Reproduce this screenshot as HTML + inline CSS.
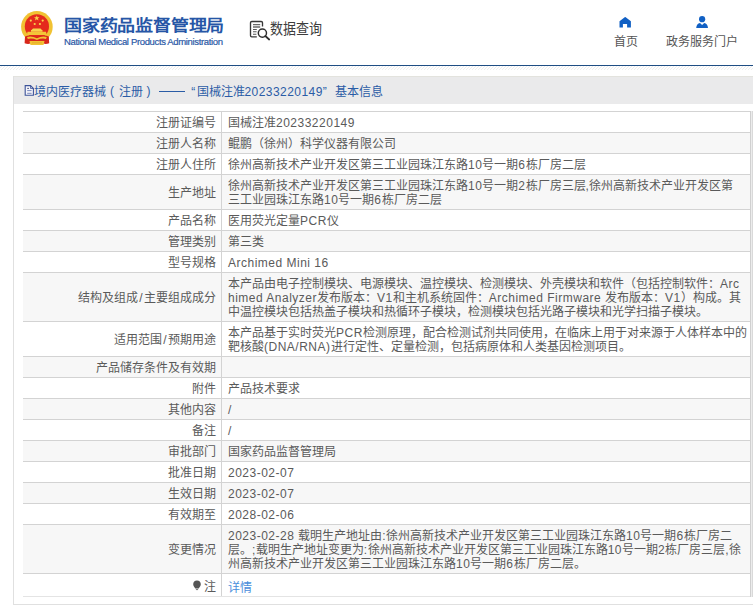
<!DOCTYPE html>
<html lang="zh-CN"><head><meta charset="utf-8">
<style>
html,body{margin:0;padding:0;background:#fff;width:753px;height:605px;overflow:hidden;font-family:"Liberation Sans",sans-serif;}
.abs{position:absolute;white-space:nowrap;}
.title{left:64px;top:15px;font-size:18px;line-height:20px;font-weight:bold;color:#2656a6;letter-spacing:-0.2px;transform:scaleY(0.9);transform-origin:50% 55%;}
.en{left:64px;top:36px;font-size:9.5px;line-height:11px;color:#2a58a6;letter-spacing:-0.35px;-webkit-text-stroke:0.2px #2a58a6;}
.sjcx{left:270px;top:21px;font-size:13px;line-height:16px;color:#3d3d3d;transform:scaleY(1.12);transform-origin:50% 45%;}
.nav{font-size:12px;line-height:14px;color:#555;}
.bline{left:0;top:65px;width:753px;height:1px;background:#1f4e84;}
.hatch{left:0;top:66px;width:753px;height:4px;background:repeating-linear-gradient(135deg,#fff 0,#fff 1.3px,#eeeeee 1.3px,#eeeeee 2.12px);}
.panel{left:13px;top:76px;width:745px;height:528px;border-left:1px solid #e0e0e0;border-bottom:1px solid #e0e0e0;background:#fff;}
.phead{left:14px;top:76px;width:739px;height:28px;background:#eaeaeb;border-top:1px solid #e3e3de;box-sizing:border-box;}
.crumb{top:85px;font-size:12px;line-height:14px;color:#2a5ca6;}
.row{position:absolute;left:23px;width:727px;border-top:1px solid #d3d3d3;}
.row.g{background:#f7f7f7;}
.lab{position:absolute;left:0;top:4px;width:192.5px;text-align:right;font-size:12px;line-height:14px;color:#5a5a5a;white-space:nowrap;}
.val{position:absolute;left:205px;top:4px;font-size:12px;line-height:14px;color:#5a5a5a;white-space:nowrap;}
.l{letter-spacing:0.5px;}
.vsep{position:absolute;left:198px;top:0;bottom:0;width:1px;background:#d3d3d3;}
.rb{left:750px;top:111px;width:3px;height:486px;background:linear-gradient(90deg,#d0d0d0 0,#d0d0d0 1px,#ececec 1px,#ececec 2px,#d9d9d9 2px);}
.pin{display:inline-block;width:12px;vertical-align:top;position:relative;top:-1px;}
.pin svg{display:block;}
</style></head><body>
<!-- emblem -->
<svg class="abs" style="left:18px;top:6px" width="38" height="42" viewBox="0 0 38 42">
  <circle cx="18.9" cy="20.8" r="15.8" fill="#f1c233"/>
  <circle cx="18.9" cy="20.4" r="12.1" fill="#e42a1d"/>
  <polygon points="18.75,9.4 19.5,11.3 21.5,11.3 19.9,12.5 20.5,14.4 18.75,13.2 17,14.4 17.6,12.5 16,11.3 18,11.3" fill="#f8d44c"/>
  <circle cx="12.8" cy="14.6" r="1.1" fill="#f8d44c"/>
  <circle cx="24.7" cy="14.6" r="1.1" fill="#f8d44c"/>
  <circle cx="16.7" cy="18" r="1.1" fill="#f8d44c"/>
  <circle cx="21.9" cy="18" r="1.1" fill="#f8d44c"/>
  <path d="M15 22.6 L22.5 22.6 L24 24 L13.5 24 Z M13 24 H24.5 V25.8 H13 Z" fill="#f8d44c"/>
  <path d="M9.5 25.8 H28 L28.6 29 H8.9 Z" fill="#f3c638"/>
  <path d="M7 30.5 Q12 28.5 18.9 31 Q25.8 28.5 30.8 30.5 L31.2 37.2 Q28 38.4 25.5 37.6 L12.3 37.6 Q9.8 38.4 6.6 37.2 Z" fill="#d8261b"/>
  <path d="M9 31 Q13.5 29.5 18.9 32.2 Q24.3 29.5 28.8 31 L28 33 Q24 31.8 18.9 34 Q13.8 31.8 9.8 33 Z" fill="#f1c233"/>
  <path d="M11.5 35 H26.5 L25.5 38.9 H12.5 Z" fill="#f1c233"/>
  <path d="M14 36 H24 V37.5 H14 Z" fill="#e9b32e"/>
</svg>
<div class="abs title">国家药品监督管理局</div>
<div class="abs en">National Medical Products Administration</div>
<!-- data query icon -->
<svg class="abs" style="left:249px;top:20px" width="22" height="21" viewBox="0 0 22 21">
  <path d="M7.8 16.8 H2.8 Q1.5 16.8 1.5 15.5 V2.8 Q1.5 1.5 2.8 1.5 H12.2 Q13.5 1.5 13.5 2.8 V6.6" fill="none" stroke="#383838" stroke-width="1.35"/>
  <path d="M4 4.6 H11.2 M4 7 H11.2" stroke="#6a6a6a" stroke-width="1.3"/>
  <path d="M4 9.5 H7.8 M4 11.8 H7.6 M4 14.2 H7.4" stroke="#5a5a5a" stroke-width="1.1"/>
  <circle cx="13.4" cy="13.1" r="4.1" fill="none" stroke="#2e2e2e" stroke-width="1.45"/>
  <path d="M16.3 16 L20.2 19.5" stroke="#2e2e2e" stroke-width="1.7" stroke-linecap="round"/>
</svg>
<div class="abs sjcx">数据查询</div>
<!-- home icon -->
<svg class="abs" style="left:619px;top:17px" width="13" height="12" viewBox="0 0 13 12">
  <path d="M0.5 4.2 L5.7 0.2 Q6.2 -0.1 6.7 0.2 L11.9 4.2 V10.5 H8.1 V6.9 H3.9 V10.5 H0.5 Z" fill="#1160c4"/>
</svg>
<div class="abs nav" style="left:614px;top:35px">首页</div>
<svg class="abs" style="left:696px;top:16px" width="13" height="13" viewBox="0 0 13 13">
  <circle cx="6.1" cy="3.2" r="3.1" fill="#1160c4"/>
  <path d="M0.2 11.9 Q0.6 7.6 4 7.1 L6.1 9 L8.2 7.1 Q11.6 7.6 12 11.9 Z" fill="#1160c4"/>
</svg>
<div class="abs nav" style="left:666px;top:35px">政务服务门户</div>
<div class="abs bline"></div>
<div class="abs hatch"></div>

<div class="abs panel"></div>
<div class="abs phead"></div>
<svg class="abs" style="left:24px;top:85px" width="11" height="12" viewBox="0 0 11 12">
  <path d="M1.2 0.6 H6.5 L9.4 3.5 V10.2 H1.2 Z" fill="#f4f4fa" stroke="#3c5399" stroke-width="1.1"/>
  <path d="M6.5 0.6 V3.5 H9.4" fill="none" stroke="#3c5399" stroke-width="0.8"/>
  <path d="M3.2 3.4 H5" stroke="#3c4a80" stroke-width="0.9"/>
  <path d="M3.2 5.6 H7.6 M3.2 8.3 H7.6" stroke="#6a7cb4" stroke-width="0.9"/>
</svg>
<div class="abs crumb" style="left:33.5px">境内医疗器械</div>
<div class="abs crumb" style="left:110px;top:83.5px">(</div>
<div class="abs crumb" style="left:118.5px">注册</div>
<div class="abs crumb" style="left:146.5px;top:83.5px">)</div>
<div class="abs" style="left:158.5px;top:91px;width:26px;height:1px;background:#2a5ca6"></div>
<div class="abs crumb" style="left:191.3px">“</div>
<div class="abs crumb" style="left:197px">国械注准</div>
<div class="abs crumb" style="left:244.5px;letter-spacing:0.45px">20233220149</div>
<div class="abs crumb" style="left:322.8px">”</div>
<div class="abs crumb" style="left:334.5px">基本信息</div>

<div id="tbl">
<div class="row" style="top:111px;height:20px"><div class="lab" style="top:4px">注册证编号</div><div class="vsep"></div><div class="val" style="top:4px">国械注准<span class="l">20233220149</span></div></div>
<div class="row g" style="top:132px;height:20px"><div class="lab" style="top:4px">注册人名称</div><div class="vsep"></div><div class="val" style="top:4px">鲲鹏（徐州）科学仪器有限公司</div></div>
<div class="row" style="top:153px;height:20px"><div class="lab" style="top:4px">注册人住所</div><div class="vsep"></div><div class="val" style="top:4px">徐州高新技术产业开发区第三工业园珠江东路<span class="l">10</span>号一期<span class="l">6</span>栋厂房二层</div></div>
<div class="row g" style="top:174px;height:34px"><div class="lab" style="top:11px">生产地址</div><div class="vsep"></div><div class="val" style="top:4px">徐州高新技术产业开发区第三工业园珠江东路<span class="l">10</span>号一期<span class="l">2</span>栋厂房三层<span class="l">,</span>徐州高新技术产业开发区第<br>三工业园珠江东路<span class="l">10</span>号一期<span class="l">6</span>栋厂房二层</div></div>
<div class="row" style="top:209px;height:20px"><div class="lab" style="top:4px">产品名称</div><div class="vsep"></div><div class="val" style="top:4px">医用荧光定量<span class="l">PCR</span>仪</div></div>
<div class="row g" style="top:230px;height:20px"><div class="lab" style="top:4px">管理类别</div><div class="vsep"></div><div class="val" style="top:4px">第三类</div></div>
<div class="row" style="top:251px;height:20px"><div class="lab" style="top:4px">型号规格</div><div class="vsep"></div><div class="val" style="top:4px"><span class="l">Archimed Mini 16</span></div></div>
<div class="row g" style="top:272px;height:48px"><div class="lab" style="top:18px">结构及组成<span style="margin:0 1px">/</span>主要组成成分</div><div class="vsep"></div><div class="val" style="top:4px">本产品由电子控制模块、电源模块、温控模块、检测模块、外壳模块和软件（包括控制软件：<span class="l">Arc</span><br><span class="l">himed Analyzer</span>发布版本：<span class="l">V1</span>和主机系统固件：<span class="l">Archimed Firmware </span>发布版本：<span class="l">V1</span>）构成。其<br>中温控模块包括热盖子模块和热循环子模块，检测模块包括光路子模块和光学扫描子模块。</div></div>
<div class="row" style="top:321px;height:34px"><div class="lab" style="top:11px">适用范围<span style="margin:0 1px">/</span>预期用途</div><div class="vsep"></div><div class="val" style="top:4px">本产品基于实时荧光<span class="l">PCR</span>检测原理，配合检测试剂共同使用，在临床上用于对来源于人体样本中的<br>靶核酸<span class="l">(DNA/RNA)</span>进行定性、定量检测，包括病原体和人类基因检测项目。</div></div>
<div class="row g" style="top:356px;height:20px"><div class="lab" style="top:4px">产品储存条件及有效期</div><div class="vsep"></div><div class="val" style="top:4px"></div></div>
<div class="row" style="top:377px;height:20px"><div class="lab" style="top:4px">附件</div><div class="vsep"></div><div class="val" style="top:4px">产品技术要求</div></div>
<div class="row g" style="top:398px;height:20px"><div class="lab" style="top:4px">其他内容</div><div class="vsep"></div><div class="val" style="top:4px"><span class="l">/</span></div></div>
<div class="row" style="top:419px;height:20px"><div class="lab" style="top:4px">备注</div><div class="vsep"></div><div class="val" style="top:4px"><span class="l">/</span></div></div>
<div class="row g" style="top:440px;height:20px"><div class="lab" style="top:4px">审批部门</div><div class="vsep"></div><div class="val" style="top:4px">国家药品监督管理局</div></div>
<div class="row" style="top:461px;height:20px"><div class="lab" style="top:4px">批准日期</div><div class="vsep"></div><div class="val" style="top:4px"><span class="l">2023-02-07</span></div></div>
<div class="row g" style="top:482px;height:20px"><div class="lab" style="top:4px">生效日期</div><div class="vsep"></div><div class="val" style="top:4px"><span class="l">2023-02-07</span></div></div>
<div class="row" style="top:503px;height:20px"><div class="lab" style="top:4px">有效期至</div><div class="vsep"></div><div class="val" style="top:4px"><span class="l">2028-02-06</span></div></div>
<div class="row g" style="top:524px;height:48px"><div class="lab" style="top:18px">变更情况</div><div class="vsep"></div><div class="val" style="top:4px"><span class="l">2023-02-28 </span>载明生产地址由<span class="l">:</span>徐州高新技术产业开发区第三工业园珠江东路<span class="l">10</span>号一期<span class="l">6</span>栋厂房二<br>层。<span class="l">;</span>载明生产地址变更为<span class="l">:</span>徐州高新技术产业开发区第三工业园珠江东路<span class="l">10</span>号一期<span class="l">2</span>栋厂房三层<span class="l">,</span>徐<br>州高新技术产业开发区第三工业园珠江东路<span class="l">10</span>号一期<span class="l">6</span>栋厂房二层。</div></div>
<div class="row" style="top:573px;height:22px"><div class="lab" style="top:6px"><span class="pin"><svg width="10" height="13" viewBox="0 0 10 13"><path d="M5 1.5 C2.6 1.5 1.2 3.2 1.2 5.3 C1.2 7.1 2.5 8.1 3.3 9.4 L6.7 9.4 C7.5 8.1 8.8 7.1 8.8 5.3 C8.8 3.2 7.4 1.5 5 1.5 Z" fill="#555"/><path d="M3.9 10.6 H6.1" stroke="#777" stroke-width="1"/></svg></span>注</div><div class="vsep"></div><div class="val" style="top:7px"><span style="color:#4a8edb">详情</span></div></div>
<div class="row" style="top:596px;height:0;border-top-color:#e4e4e4"></div>
</div>
<div class="abs rb"></div>
</body></html>
